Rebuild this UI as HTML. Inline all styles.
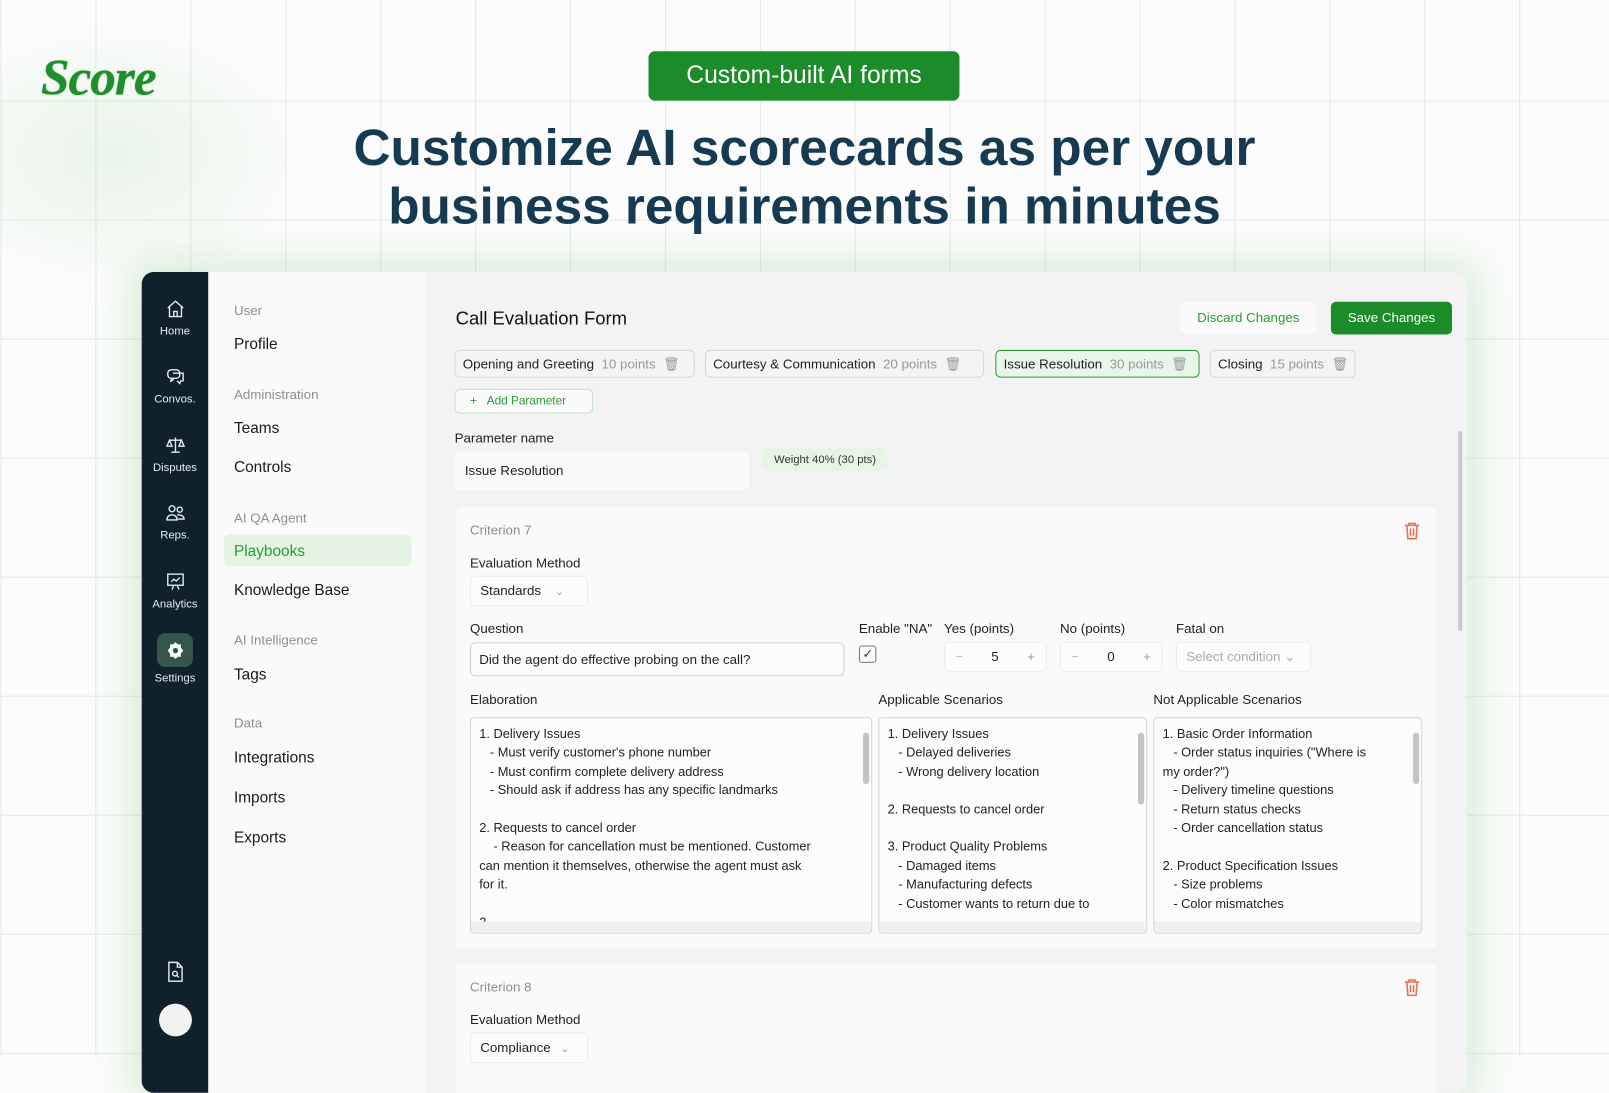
<!DOCTYPE html>
<html><head><meta charset="utf-8"><style>
*{box-sizing:border-box;margin:0;padding:0}
body{width:1609px;height:1056px;overflow:hidden;font-family:"Liberation Sans",sans-serif;position:relative;background:#fbfcfb}
#w{position:absolute;left:0;top:0;width:1568px;height:1030px;transform:scale(1.02615);transform-origin:0 0}
.grid{position:absolute;inset:0;background-image:linear-gradient(to right,#e2e8e5 1px,transparent 1px),linear-gradient(to bottom,#e2e8e5 1px,transparent 1px);background-size:92.5px 116px;background-position:0.5px -18px}
.glow1{position:absolute;left:-80px;top:20px;width:380px;height:260px;background:radial-gradient(ellipse at center,rgba(200,230,200,.35),transparent 70%)}
.a{position:absolute}
.logo{left:40px;top:46px;font-family:"Liberation Serif",serif;font-style:italic;font-weight:bold;font-size:50px;color:#1f8f2e;letter-spacing:-1px;text-shadow:0 0 1px #1f8f2e}
.pill{left:632px;top:50px;width:303px;height:48px;background:#1c8c2a;border-radius:6px;color:#fff;font-size:24px;text-align:center;line-height:48px}
.h1{left:0;width:1568px;top:116px;text-align:center;color:#163a52;font-weight:bold;font-size:50px;line-height:57px}
.card{left:138px;top:265px;width:1292px;height:800px;border-radius:12px;overflow:hidden;background:#f3f3f3;box-shadow:0 0 40px 10px rgba(150,205,150,.35)}
.side{position:absolute;left:0;top:0;width:65px;height:100%;background:#0e212d}
.si{position:absolute;left:0;width:65px;text-align:center;color:#e7ecee;font-size:11px}
.si svg{display:block;margin:0 auto 6px}
.nav{position:absolute;left:65px;top:0;width:212px;height:100%;background:#fafafa}
.nh{position:absolute;left:25px;font-size:13px;color:#8e8e8e}
.ni{position:absolute;left:25px;font-size:15px;color:#1b1b1b}
.main{position:absolute;left:277px;top:0;right:0;bottom:0}
.t{position:absolute;white-space:nowrap}
.chip{position:absolute;top:76px;height:27px;border:1px solid #d6d6d6;border-radius:5px;font-size:13px;line-height:25px;padding-left:7px;color:#222;background:#f4f4f4}
.chip span{color:#999}
.box{position:absolute;background:#fafafa;border:1px solid #dedede;border-radius:6px}
.lbl{position:absolute;font-size:13px;color:#222;white-space:nowrap}
.ta{position:absolute;background:#fcfcfc;border:1px solid #d4d4d4;border-radius:4px;font-size:12.5px;line-height:18.4px;color:#222;padding:6px 8px;overflow:hidden;white-space:pre}
.sb{position:absolute;right:2px;top:14px;width:6px;height:50px;background:#c4c4c4;border-radius:3px}
.hs{position:absolute;left:0;right:0;bottom:0;height:11px;background:#f0f0f0}
</style></head><body><div id="w">
<div class="grid"></div>
<div class="glow1"></div>
<div class="a logo">Score</div>
<div class="a pill">Custom-built AI forms</div>
<div class="a h1">Customize AI scorecards as per your<br>business requirements in minutes</div>
<div class="a card">
 <div class="side">
  <div class="si" style="top:26px"><svg width="20" height="20" viewBox="0 0 24 24" fill="none" stroke="#e7ecee" stroke-width="1.6"><path d="M3 11l9-8 9 8M5 9v12h14V9M10 21v-6h4v6"/></svg>Home</div>
  <div class="si" style="top:92px"><svg width="20" height="20" viewBox="0 0 24 24" fill="none" stroke="#e7ecee" stroke-width="1.6"><rect x="3" y="4" width="14" height="10" rx="4"/><path d="M8 14l-2 4 4-3M9 8h12v9h-3l-1 3-3-3"/></svg>Convos.</div>
  <div class="si" style="top:159px"><svg width="20" height="20" viewBox="0 0 24 24" fill="none" stroke="#e7ecee" stroke-width="1.6"><path d="M12 3v17M5 6h14M7 20h10M5 6l-3 7h6zM19 6l-3 7h6z"/></svg>Disputes</div>
  <div class="si" style="top:225px"><svg width="20" height="20" viewBox="0 0 24 24" fill="none" stroke="#e7ecee" stroke-width="1.6"><circle cx="8" cy="7" r="3.5"/><circle cx="17" cy="8" r="3"/><path d="M2 20c0-4 3-6 6-6s6 2 6 6zM14 14c4 0 8 1 8 5h-7"/></svg>Reps.</div>
  <div class="si" style="top:292px"><svg width="20" height="20" viewBox="0 0 24 24" fill="none" stroke="#e7ecee" stroke-width="1.6"><rect x="3" y="3" width="18" height="13"/><path d="M7 12l3-3 3 2 4-4M8 21l2-5M16 21l-2-5"/></svg>Analytics</div>
  <div style="position:absolute;left:15px;top:352px;width:35px;height:33px;border-radius:8px;background:#35564c"></div>
  <div class="si" style="top:360px"><svg width="18" height="18" viewBox="0 0 24 24" fill="#fff"><path d="M12 1l3 3h4v4l3 4-3 4v4h-4l-3 3-3-3H5v-4l-3-4 3-4V4h4z"/><circle cx="12" cy="12" r="3.5" fill="#35564c"/></svg><div style="margin-top:12px">Settings</div></div>
  <div class="si" style="top:670px"><svg width="22" height="24" viewBox="0 0 24 24" fill="none" stroke="#e7ecee" stroke-width="1.5"><path d="M5 2h9l5 5v15H5zM14 2v5h5"/><circle cx="11.5" cy="14" r="2.5"/><path d="M13.5 16l2 2"/></svg></div>
  <div style="position:absolute;left:17px;top:713px;width:32px;height:32px;border-radius:50%;background:#f2f2f2"></div>
 </div>
 <div class="nav">
  <div class="nh" style="top:30px">User</div><div class="ni" style="top:62px">Profile</div>
  <div class="nh" style="top:112px">Administration</div><div class="ni" style="top:144px">Teams</div><div class="ni" style="top:182px">Controls</div>
  <div class="nh" style="top:232px">AI QA Agent</div>
  <div style="position:absolute;left:15px;top:256px;width:183px;height:31px;border-radius:6px;background:#e4f3e4"></div>
  <div class="ni" style="top:264px;color:#2a9a3a">Playbooks</div><div class="ni" style="top:302px">Knowledge Base</div>
  <div class="nh" style="top:351px">AI Intelligence</div><div class="ni" style="top:384px">Tags</div>
  <div class="nh" style="top:432px">Data</div><div class="ni" style="top:465px">Integrations</div><div class="ni" style="top:504px">Imports</div><div class="ni" style="top:543px">Exports</div>
 </div>
 <div class="main">
  <div class="t" style="left:29px;top:35px;font-size:18px;color:#111">Call Evaluation Form</div>
  <div class="t" style="left:735px;top:29px;width:133px;height:32px;background:#fafafa;border-radius:5px;color:#2a9a3a;font-size:13px;text-align:center;line-height:32px">Discard Changes</div>
  <div class="t" style="left:882px;top:29px;width:118px;height:32px;background:#1c8c2a;border-radius:5px;color:#fff;font-size:13px;text-align:center;line-height:32px">Save Changes</div>
  <div class="chip" style="left:28px;width:234px">Opening and Greeting <span>&nbsp;10 points &nbsp;🗑</span></div>
  <div class="chip" style="left:272px;width:272px">Courtesy &amp; Communication <span>&nbsp;20 points &nbsp;🗑</span></div>
  <div class="chip" style="left:555px;width:199px;border-color:#2a9a3a;background:#eaf5ea">Issue Resolution <span>&nbsp;30 points &nbsp;🗑</span></div>
  <div class="chip" style="left:764px;width:142px">Closing <span>&nbsp;15 points &nbsp;🗑</span></div>
  <div class="t" style="left:28px;top:114px;width:135px;height:24px;border:1px solid #bfe3c4;border-radius:5px;background:#fafafa;color:#2a9a3a;font-size:11.5px;line-height:22px;padding-left:14px">+ &nbsp;&nbsp;Add Parameter</div>
  <div class="lbl" style="left:28px;top:154px">Parameter name</div>
  <div class="t" style="left:28px;top:175px;width:287px;height:37px;background:#fafafa;border-radius:5px;font-size:13px;line-height:37px;padding-left:10px;color:#222">Issue Resolution</div>
  <div class="t" style="left:328px;top:172px;width:122px;height:22px;background:#e6f4e6;border-radius:5px;font-size:11px;line-height:22px;text-align:center;color:#333">Weight 40% (30 pts)</div>
  <div class="t" style="left:1006px;top:155px;width:4px;height:195px;background:#c9c9c9;border-radius:2px"></div>
  <div class="box" style="left:29px;top:229px;width:956px;height:430px;border:none">
   <div class="lbl" style="left:14px;top:15px;color:#8e8e8e">Criterion 7</div>
   <svg style="position:absolute;left:924px;top:14px" width="16" height="18" viewBox="0 0 16 18" fill="none" stroke="#ef6a4c" stroke-width="1.5"><path d="M1 4h14M5 4V2h6v2M3 4l1 13h8l1-13M6.5 7v7M9.5 7v7"/></svg>
   <div class="lbl" style="left:14px;top:47px">Evaluation Method</div>
   <div class="t" style="left:14px;top:67px;width:115px;height:30px;background:#fcfcfc;border:1px solid #ececec;border-radius:5px;font-size:13px;line-height:28px;padding-left:9px;color:#222">Standards <span style="color:#999;margin-left:10px;font-size:10px">⌄</span></div>
   <div class="lbl" style="left:14px;top:111px">Question</div>
   <div class="t" style="left:14px;top:132px;width:365px;height:33px;background:#fcfcfc;border:1px solid #d0d0d0;border-radius:5px;font-size:13px;line-height:31px;padding-left:8px;color:#222">Did the agent do effective probing on the call?</div>
   <div class="lbl" style="left:393px;top:111px">Enable "NA"</div>
   <div class="t" style="left:393px;top:135px;width:17px;height:17px;border:1px solid #777;border-radius:3px;font-size:12px;text-align:center;line-height:15px;color:#333">✓</div>
   <div class="lbl" style="left:476px;top:111px">Yes (points)</div>
   <div class="t" style="left:476px;top:131px;width:100px;height:30px;background:#fcfcfc;border:1px solid #ececec;border-radius:5px;font-size:13px;line-height:28px;color:#222"><span style="position:absolute;left:10px;color:#bbb">−</span><span style="position:absolute;left:45px">5</span><span style="position:absolute;left:80px;color:#999">+</span></div>
   <div class="lbl" style="left:589px;top:111px">No (points)</div>
   <div class="t" style="left:589px;top:131px;width:100px;height:30px;background:#fcfcfc;border:1px solid #ececec;border-radius:5px;font-size:13px;line-height:28px;color:#222"><span style="position:absolute;left:10px;color:#bbb">−</span><span style="position:absolute;left:45px">0</span><span style="position:absolute;left:80px;color:#999">+</span></div>
   <div class="lbl" style="left:702px;top:111px">Fatal on</div>
   <div class="t" style="left:702px;top:131px;width:132px;height:30px;background:#fcfcfc;border:1px solid #ececec;border-radius:5px;font-size:13px;line-height:28px;padding-left:9px;color:#aaa">Select condition ⌄</div>
   <div class="lbl" style="left:14px;top:180px">Elaboration</div>
   <div class="lbl" style="left:412px;top:180px">Applicable Scenarios</div>
   <div class="lbl" style="left:680px;top:180px">Not Applicable Scenarios</div>
   <div class="ta" style="left:14px;top:205px;width:392px;height:211px">1. Delivery Issues
   - Must verify customer's phone number
   - Must confirm complete delivery address
   - Should ask if address has any specific landmarks

2. Requests to cancel order
    - Reason for cancellation must be mentioned. Customer
can mention it themselves, otherwise the agent must ask
for it.

3. ...<div class="sb"></div><div class="hs"></div></div>
   <div class="ta" style="left:412px;top:205px;width:262px;height:211px">1. Delivery Issues
   - Delayed deliveries
   - Wrong delivery location

2. Requests to cancel order

3. Product Quality Problems
   - Damaged items
   - Manufacturing defects
   - Customer wants to return due to
   <div class="sb" style="height:70px"></div><div class="hs"></div></div>
   <div class="ta" style="left:680px;top:205px;width:262px;height:211px">1. Basic Order Information
   - Order status inquiries ("Where is
my order?")
   - Delivery timeline questions
   - Return status checks
   - Order cancellation status

2. Product Specification Issues
   - Size problems
   - Color mismatches
<div class="sb"></div><div class="hs"></div></div>
  </div>
  <div class="box" style="left:29px;top:674px;width:956px;height:140px;border:none">
   <div class="lbl" style="left:14px;top:15px;color:#8e8e8e">Criterion 8</div>
   <svg style="position:absolute;left:924px;top:14px" width="16" height="18" viewBox="0 0 16 18" fill="none" stroke="#ef6a4c" stroke-width="1.5"><path d="M1 4h14M5 4V2h6v2M3 4l1 13h8l1-13M6.5 7v7M9.5 7v7"/></svg>
   <div class="lbl" style="left:14px;top:47px">Evaluation Method</div>
   <div class="t" style="left:14px;top:67px;width:115px;height:30px;background:#fcfcfc;border:1px solid #ececec;border-radius:5px;font-size:13px;line-height:28px;padding-left:9px;color:#222">Compliance <span style="color:#999;margin-left:6px;font-size:10px">⌄</span></div>
  </div>
 </div>
</div>
</div></body></html>
